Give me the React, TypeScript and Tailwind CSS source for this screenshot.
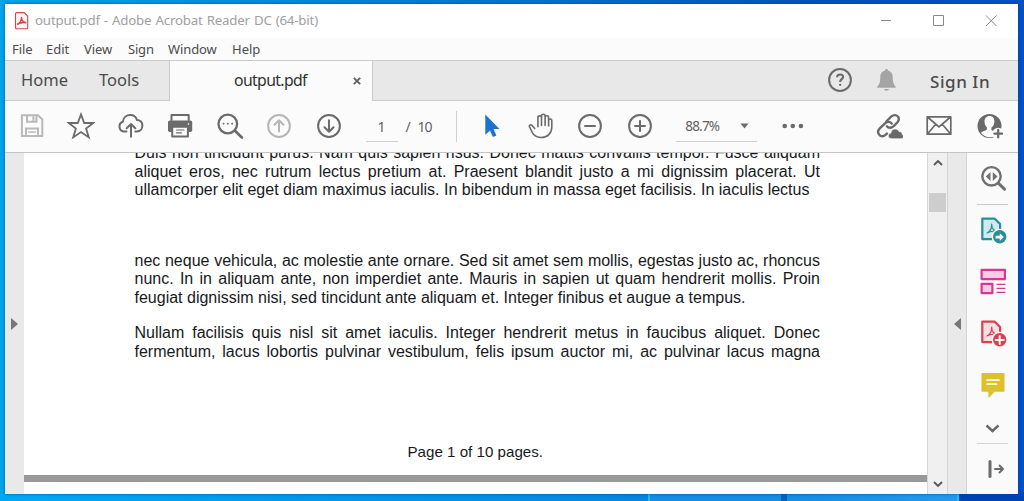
import type { ReactNode } from "react";

function Icon({ children, size = 28, className = "" }: { children: ReactNode; size?: number; className?: string }) {
  return (
    <svg
      width={size}
      height={size}
      viewBox="0 0 28 28"
      fill="none"
      stroke="currentColor"
      strokeWidth="2"
      strokeLinecap="round"
      strokeLinejoin="round"
      className={`block shrink-0 ${className}`}
    >
      {children}
    </svg>
  );
}

const leftTools: { name: string; tone: string; art: ReactNode }[] = [
  {
    name: "Save",
    tone: "text-[#b9b9b9]",
    art: (
      <>
        <path d="M3.900 3.200h16l4.400 4.300v16.600H3.900z" strokeLinejoin="miter" />
        <path d="M9 3.500v6.200h9.500V3.500M15.400 5v3.300M8 24v-7.500h12V24" strokeLinejoin="miter" />
        <path d="M10.500 20h7" strokeWidth="1.500" />
      </>
    ),
  },
  {
    name: "Star",
    tone: "text-[#6b6b6b]",
    art: <path d="M14 2.400 17.200 11h9.100l-7.200 5.500 2.700 8.900L14 20l-7.800 5.400 2.700-8.900L1.700 11h9.100z" strokeWidth="1.800" strokeLinejoin="miter" />,
  },
  {
    name: "Upload",
    tone: "text-[#6b6b6b]",
    art: (
      <>
        <path d="M9.500 19.500H7.400A5 5 0 0 1 5.800 9.800C6.300 5.600 9.600 3 13.200 3c3.500 0 5.900 2 6.700 4.900 3.400 0 5.500 2.500 5.500 5.700 0 3.500-2.300 5.900-5.500 5.900h-1.600" />
        <path d="M14 24.800V12.300M9.700 16.200l4.300-4.200 4.300 4.200" />
      </>
    ),
  },
  {
    name: "Print",
    tone: "text-[#6b6b6b]",
    art: (
      <>
        <path d="M5.500 8V2.900h17.200V8" />
        <rect x="2" y="8.500" width="24.200" height="11.500" rx="1.800" fill="currentColor" stroke="none" />
        <path d="M22.400 12h.2" stroke="#fbfbfb" strokeWidth="1.500" />
        <path d="M6.200 14.800h15.700v9.600H6.200z" fill="#fbfbfb" />
        <path d="M10.500 18h7.500M10.500 20.800h5" strokeWidth="1.200" />
      </>
    ),
  },
  {
    name: "Search",
    tone: "text-[#6b6b6b]",
    art: (
      <>
        <circle cx="11.800" cy="12" r="9.300" strokeWidth="2.300" />
        <path d="m18.900 18.800 7 6.700" strokeWidth="2.700" />
        <path d="M7.500 11.700h.1M11.800 11.700h.1M16.100 11.700h.1" strokeWidth="1.800" />
      </>
    ),
  },
  {
    name: "Previous page",
    tone: "text-[#b6b6b6]",
    art: (
      <>
        <circle cx="14" cy="14" r="10.900" />
        <path d="M14 19.500v-11M9.500 12.700 14 8.200l4.500 4.500" />
      </>
    ),
  },
  {
    name: "Next page",
    tone: "text-[#6b6b6b]",
    art: (
      <>
        <circle cx="14" cy="14" r="10.900" />
        <path d="M14 8.300v11M9.500 15.300l4.500 4.500 4.500-4.500" />
      </>
    ),
  },
];

const viewTools: { name: string; art: ReactNode }[] = [
  {
    name: "Select",
    art: <path d="M7.300 2.500v20.200l4.700-4.300 2.900 6.600 3.500-1.600-2.900-6.300h6z" fill="#1b73d0" stroke="none" />,
  },
  {
    name: "Pan",
    art: (
      <path
        d="M7.700 16.500 4.900 13.300c-.8-1-2.700-.4-2.600 1 1.200 2.200 2.500 6 4.200 8 1.800 2.100 4.200 3.200 7.500 3.200 6.500 0 10.800-4.300 10.800-10.500V8.600c0-2.100-3.200-2.100-3.200 0V14 5.400c0-2.200-3.500-2.200-3.500 0v8.100V3.900c0-2.200-3.600-2.200-3.600 0v9.600-8c0-2.200-3.600-2.200-3.600 0v9.200"
        strokeWidth="1.600"
      />
    ),
  },
  {
    name: "Zoom out",
    art: (
      <>
        <circle cx="14" cy="14" r="10.900" />
        <path d="M9 14h10" />
      </>
    ),
  },
  {
    name: "Zoom in",
    art: (
      <>
        <circle cx="14" cy="14" r="10.900" />
        <path d="M9 14h10M14 9v10" />
      </>
    ),
  },
];

function DocIcon({ badge, tint, children }: { badge: string; tint: string; children: ReactNode }) {
  return (
    <Icon className={badge}>
      <path d="M3.300 2.700h12.500l5.300 5.400v15H3.300z" fill={tint} strokeWidth="2.200" />
      <path d="M8 17c3-1.300 4.700-4.300 4.700-8.800 0 4.200 2.600 6.600 5.800 6.900-3-.3-7.300.2-10.500 1.900z" strokeWidth="1.200" />
      <circle cx="20.700" cy="20.800" r="7.400" fill="currentColor" stroke="#fafafa" strokeWidth="1.400" />
      {children}
    </Icon>
  );
}

function Line({ children, loose = false }: { children: ReactNode; loose?: boolean }) {
  return (
    <span className={loose ? "block h-[18.200px] whitespace-nowrap" : "block h-[18.200px] whitespace-nowrap [text-align-last:justify]"}>
      {children}
    </span>
  );
}

export default function App() {
  return (
    <div className="relative flex h-[501px] w-[1024px] overflow-hidden bg-[linear-gradient(90deg,#00a4ec_0%,#0089dd_30%,#0071d0_55%,#0052bd_80%,#0050c8_100%)] px-[5px] pt-1 font-['Noto_Sans','Open_Sans',sans-serif] text-[#4b4b4b]">
      <div className="absolute inset-x-0 bottom-0 flex h-[8px]">
        <div className="w-[648px] bg-[linear-gradient(90deg,#00a9f4,#0785df)]" />
        <div className="w-[133px] border-l-2 border-[#20bdea] bg-[#168de3]" />
        <div className="w-[6px] bg-[#0064bc]" />
        <div className="w-[172px] border-r-2 border-[#20bdea] bg-[linear-gradient(90deg,#168de3,#2499ec)]" />
        <div className="flex-1 bg-[#0043b4]" />
      </div>
      <main className="relative flex h-[490px] w-[1013px] flex-col bg-[#fbfbfb] shadow-[0_0_3px_rgba(0,55,100,0.65)]">
        <header className="flex h-[34px] shrink-0 items-center bg-white pl-2">
          <svg width="17" height="20" viewBox="0 0 17 20" fill="none" stroke="#d44745" className="mr-[5px]">
            <path d="M3.500 1.600h7.700l3.500 3.500v11.600q0 1-1 1H3.500q-1 0-1-1V2.600q0-1 1-1z" fill="#fff5f4" strokeWidth="1.100" />
            <path d="M4.500 13.200c2.200-1 4-3.600 4-6.600 0 3.100 2 4.700 4.300 5.100-2.700-.4-5.800 0-8.300 1.500z" strokeWidth="1.500" strokeLinejoin="round" />
          </svg>
          <h1 className="w-[283px] whitespace-nowrap text-[13.300px] font-normal tracking-[-0.190px] text-[#a0a0a0] [text-align-last:justify]">output.pdf - Adobe Acrobat Reader DC (64-bit)</h1>
          <svg className="ml-auto mr-[18px]" width="120" height="16" viewBox="0 0 120 16" fill="none" stroke="#888">
            <path d="M1 7.500h10M53.500 2.500h10v10h-10zM106 2.500l10.500 10.500M116.500 2.500 106 13" />
          </svg>
        </header>
        <nav className="flex h-[22px] shrink-0 items-center gap-[14px] pl-[7px] pt-[2px] text-[13px]">
          <span className="w-[20px] whitespace-nowrap tracking-[-0.100px]">File</span>
          <span className="w-[24px] whitespace-nowrap">Edit</span>
          <span className="w-[30px] whitespace-nowrap tracking-[-0.100px]">View</span>
          <span className="w-[26px] whitespace-nowrap tracking-[-0.200px]">Sign</span>
          <span className="w-[50px] whitespace-nowrap tracking-[-0.100px]">Window</span>
          <span>Help</span>
        </nav>
        <div className="flex h-[41px] shrink-0 border-t border-[#cbcbcb] text-[16.500px]">
          <div className="flex w-[165px] items-center border-b border-r border-[#cbcbcb] bg-[#e8e8e8] pl-4">
            <span className="w-[78px]">Home</span>
            <span>Tools</span>
          </div>
          <div className="flex w-[202px] items-center pl-[64px] text-[#303030]">
            <span className="w-[119px] whitespace-nowrap text-[15.800px] tracking-[-0.650px]">output.pdf</span>
            <svg width="8" height="8" viewBox="0 0 8 8" stroke="#606060" strokeWidth="1.800">
              <path d="m.8.8 6.400 6.400M7.200.8.8 7.200" />
            </svg>
          </div>
          <div className="flex flex-1 items-center border-b border-l border-[#cbcbcb] bg-[#e8e8e8] pl-[453px]">
            <Icon className="-mt-[2px] text-[#6b6b6b]">
              <circle cx="14" cy="14" r="10.900" />
              <path d="M11 11.300c.1-2 1.400-2.800 3.100-2.800s3 .9 3 2.500c0 2.100-3 2.300-3 5" strokeLinecap="butt" strokeWidth="2.100" />
              <path d="M14.100 18.800h.1" strokeWidth="2.300" />
            </Icon>
            <Icon className="-mt-[2px] ml-[18px] text-[#a4a4a4]">
              <path d="M13 4.500c0-2 3-2 3 0 3.400.8 4.700 3.600 4.700 7.100 0 4.200.6 6.800 3 9.200v1H5.200v-1c2.500-2.400 3.100-5 3.100-9.200 0-3.500 1.300-6.300 4.700-7.100zM12 23h5c-.5 2.200-4.500 2.200-5 0z" fill="currentColor" stroke="none" />
            </Icon>
            <span className="ml-[30px] w-[63px] whitespace-nowrap pt-[2px] text-[17px] font-medium tracking-[0.550px]">Sign In</span>
          </div>
        </div>
        <div className="flex h-[51px] shrink-0 items-center text-[14px] text-[#626262]">
          <div className="flex pb-[2px] pl-[2px]">
            {leftTools.map((tool) => (
              <button key={tool.name} aria-label={tool.name} className="flex w-[49.500px] justify-center">
                <Icon className={tool.tone}>{tool.art}</Icon>
              </button>
            ))}
          </div>
          <div className="ml-[12px] flex h-[31px] w-[32px] items-center justify-center border-b border-[#cfcfcf]">1</div>
          <span className="ml-[8px] w-[12px]">/</span>
          <span className="w-[38px] tracking-[-1px]">10</span>
          <div className="h-[31px] w-px bg-[#cfcfcf]" />
          <div className="flex pb-[2px] pl-[11px] text-[#6b6b6b]">
            {viewTools.map((tool) => (
              <button key={tool.name} aria-label={tool.name} className="flex w-[49.200px] justify-center">
                <Icon>{tool.art}</Icon>
              </button>
            ))}
          </div>
          <div className="ml-[12px] flex h-[31px] w-[81px] items-center justify-between border-b border-[#cfcfcf] pl-[9px] pr-[8px]">
            <span className="text-[13.500px] tracking-[-0.800px]">88.7%</span>
            <svg width="9" height="6" fill="#6b6b6b"><path d="M.5.500h8L4.500 5.500z" /></svg>
          </div>
          <svg className="-mt-[2px] ml-[25px]" width="22" height="6" fill="#6b6b6b">
            <circle cx="2.700" cy="3" r="2.300" /><circle cx="10.800" cy="3" r="2.300" /><circle cx="18.900" cy="3" r="2.300" />
          </svg>
          <div className="ml-auto flex gap-[22px] pb-[2px] pr-[15px] text-[#696969]">
            <Icon>
              <path d="m11.300 9.500 4.800-4.800c2.400-2.300 5.700-2 7.100.2 1.200 2 .8 4-1.500 6.200l-3.300 3.200c-2.200 2-5.100 1.900-6.500 0" strokeWidth="2.400" />
              <path d="m16.700 11.500c-1.800-2.300-4.500-2.100-6.700-.1l-5 4.800c-2.100 2-2.400 4.300-1.100 6.200 1.700 2.400 4.500 2.300 6.600.5l1.400-1.300" strokeWidth="2.400" />
              <path d="M16.800 26.700c-4.600 0-4.400-5-.9-5.700.5-4.900 6.800-5.400 8.100-1.400 2.200 0 3.200 1.100 3.200 2.900 2.400 1.100 1.700 4.200-1 4.200z" fill="currentColor" stroke="#fbfbfb" strokeWidth=".6" />
            </Icon>
            <Icon>
              <path d="M2.200 4.800h23.600v17.400H2.200zM3 5.500l11 9.400 11-9.400M3 21.300l7.700-9M25 21.300l-7.700-9" strokeWidth="1.700" />
            </Icon>
            <Icon className="translate-x-px">
              <circle cx="13.500" cy="14" r="12" fill="currentColor" stroke="none" />
              <path d="M13.500 3.900c-3.300 0-5 2.500-5 5.700 0 2.500 1 4.600 2.400 5.900v2c-1.800 1.500-4.300 1.700-6 3.200 3.100 4.300 8.900 5.800 13.900 3.300l.2-3.800c-1.300-1-2.800-1.500-3.600-2.300v-2.300c1.900-1.300 3-3.700 3-6.300 0-3.200-1.800-5.400-4.900-5.400z" fill="#fbfbfb" stroke="none" />
              <circle cx="22.200" cy="21.800" r="6" fill="#fbfbfb" stroke="none" />
              <path d="M22.200 17.900v7.600M18.400 21.700H26" strokeWidth="2.200" />
            </Icon>
          </div>
        </div>
        <div className="flex h-[342px] border-t border-[#c4c4c4]">
          <aside className="flex w-[19px] items-center justify-end bg-[#e9e9e9] pr-[6px]">
            <svg width="7" height="12" fill="#777"><path d="M0 0v12l7-6z" /></svg>
          </aside>
          <article className="flex w-[903px] flex-col overflow-hidden bg-white font-['Liberation_Sans',sans-serif] text-[16px] leading-[18.200px] text-[#18191c]">
            <div className="ml-[110.500px] h-[322px] w-[685.500px]">
              <p className="-mt-[8.700px]">
                <Line>Duis non tincidunt purus. Nam quis sapien risus. Donec mattis convallis tempor. Fusce aliquam</Line>
                <Line>aliquet eros, nec rutrum lectus pretium at. Praesent blandit justo a mi dignissim placerat. Ut</Line>
                <Line loose>ullamcorper elit eget diam maximus iaculis. In bibendum in massa eget facilisis. In iaculis lectus</Line>
              </p>
              <p className="mt-[53.400px]">
                <Line>nec neque vehicula, ac molestie ante ornare. Sed sit amet sem mollis, egestas justo ac, rhoncus</Line>
                <Line>nunc. In in aliquam ante, non imperdiet ante. Mauris in sapien ut quam hendrerit mollis. Proin</Line>
                <Line loose>feugiat dignissim nisi, sed tincidunt ante aliquam et. Integer finibus et augue a tempus.</Line>
              </p>
              <p className="mt-[17.600px]">
                <Line>Nullam facilisis quis nisl sit amet iaculis. Integer hendrerit metus in faucibus aliquet. Donec</Line>
                <Line>fermentum, lacus lobortis pulvinar vestibulum, felis ipsum auctor mi, ac pulvinar lacus magna</Line>
              </p>
              <p className="mt-[82.500px] pr-[4px] text-center text-[15.150px]">Page 1 of 10 pages.</p>
            </div>
            <div className="h-[7px] shrink-0 bg-[#999]" />
          </article>
          <div className="flex w-[20px] flex-col items-center border-l border-[#d7d7d7] bg-[#f0f0f0]">
            <svg className="mt-[6px]" width="10" height="7" fill="none" stroke="#555" strokeWidth="1.800"><path d="m1 6 4-4 4 4" /></svg>
            <div className="mt-[27px] h-[19px] w-[17px] bg-[#cdcdcd]" />
            <svg className="mb-[6px] mt-auto" width="10" height="7" fill="none" stroke="#555" strokeWidth="1.800"><path d="m1 1 4 4 4-4" /></svg>
          </div>
          <div className="flex w-[20px] items-center justify-center border-x border-[#d4d4d4] bg-[#e9e9e9]">
            <svg width="7" height="12" fill="#777"><path d="M7 0v12L0 6z" /></svg>
          </div>
          <aside className="flex w-[51px] flex-col items-center bg-[#fafafa] pt-[11px]">
            <Icon className="text-[#707070]">
              <circle cx="12.500" cy="12.300" r="9.200" strokeWidth="2.400" />
              <path d="m19.500 19.300 6 5.800" strokeWidth="3" />
              <path d="M11.500 8v9l-4.700-4.500zM13.800 8v9l4.700-4.500z" fill="currentColor" stroke="none" />
            </Icon>
            <div className="mt-[12px] h-px w-[31px] bg-[#c8c8c8]" />
            <div className="mt-[11px]">
              <DocIcon badge="text-[#278f93]" tint="#cfeaed">
                <path d="M16.500 19.700h4.300v-2.500l4 3.900-4 3.900v-2.600h-4.300z" fill="#fff" stroke="none" />
              </DocIcon>
            </div>
            <Icon className="mt-[23px] text-[#d43991]">
              <path d="M2.600 2.900h23.300v9.200H2.600zM2.600 16.800h10.800v9.300H2.600z" fill="#f8cce4" strokeWidth="2.200" />
              <path d="M18 17.300h8M18 21.300h8M18 25.300h8" strokeWidth="1.200" />
            </Icon>
            <div className="mt-[24px]">
              <DocIcon badge="text-[#d9414e]" tint="#fce0e1">
                <path d="M20.700 17v8M16.700 21h8" stroke="#fff" strokeWidth="2" />
              </DocIcon>
            </div>
            <Icon className="mt-[24px] text-[#dcc02e]">
              <path d="M3.200 2.800h21.600v17.300h-9.500l-5.200 5.500v-5.500H3.200z" fill="currentColor" strokeWidth="1.500" />
              <path d="M8 9.200h12M8 13.200h9.500" stroke="#fffbd8" strokeWidth="1.700" />
            </Icon>
            <svg className="mt-[25px]" width="15" height="9" fill="none" stroke="#686868" strokeWidth="2.400"><path d="m1.500 1.500 6 5.500 6-5.500" /></svg>
            <div className="mt-[10px] h-px w-[31px] bg-[#d2d2d2]" />
            <Icon className="mt-[11px] text-[#6b6b6b]">
              <path d="M11 6.500v15" strokeWidth="3" />
              <path d="M16 14h7.500M20.500 10.500 24 14l-3.500 3.500" />
            </Icon>
          </aside>
        </div>
      </main>
    </div>
  );
}
